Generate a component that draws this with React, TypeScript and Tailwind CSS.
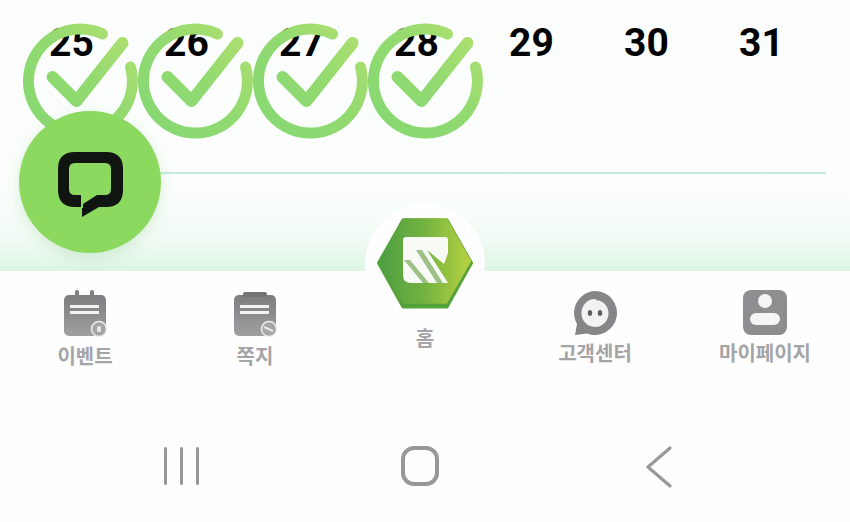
import React from 'react';

const days = [25, 26, 27, 28, 29, 30, 31];
const checked = [25, 26, 27, 28];

const CheckMark: React.FC<{ id: number }> = ({ id }) => (
  <svg width="120" height="120" viewBox="0 0 120 120" className="absolute left-[6px] top-0">
    <defs>
      <linearGradient id={`ring-${id}`} gradientUnits="userSpaceOnUse" x1="10" y1="110" x2="110" y2="10">
        <stop offset="0" stopColor="#86d873" />
        <stop offset="0.55" stopColor="#92da70" />
        <stop offset="1" stopColor="#b0df70" />
      </linearGradient>
    </defs>
    <path d="M82.5 13 A52 52 0 1 0 110.5 46" fill="none" stroke={`url(#ring-${id})`} strokeWidth="11" strokeLinecap="round" />
    <path d="M32.5 56 L56.5 80 L102.5 22" fill="none" stroke={`url(#ring-${id})`} strokeWidth="12" strokeLinecap="round" strokeLinejoin="round" />
  </svg>
);

const ChatIcon = () => (
  <svg width="66" height="66" viewBox="0 0 66 66">
    <path d="M18 1 H49 Q66 1 66 18 V39 Q66 56 49 56 H42 L25 66 V56 H18 Q1 56 1 39 V18 Q1 1 18 1 Z" fill="#111512" />
    <path d="M18 12 H48 Q54 12 54 18 V38 Q54 44 48 44 H40 L26 53 V44 H18 Q12 44 12 38 V18 Q12 12 18 12 Z" fill="#8cd95f" />
    <rect x="24" y="44" width="2" height="13" fill="#8cd95f" />
  </svg>
);

const Logo = () => (
  <svg width="100" height="94" viewBox="0 0 100 94">
    <defs>
      <linearGradient id="hex" x1="0" y1="0" x2="1" y2="0">
        <stop offset="0" stopColor="#4c9e42" />
        <stop offset="0.5" stopColor="#74b340" />
        <stop offset="1" stopColor="#b7d142" />
      </linearGradient>
    </defs>
    <path d="M28 4 H72 L96.5 47 L72 91 H28 L3.5 47 Z" fill="#55a23a" stroke="#55a23a" strokeWidth="3" strokeLinejoin="round" />
    <path d="M28.5 3 H71.5 L95.5 45 L71.5 87 H28.5 L4.5 45 Z" fill="url(#hex)" stroke="url(#hex)" strokeWidth="1.5" strokeLinejoin="round" />
    <path d="M31 21 H70 Q73 21 73 24 V37 L69 48 L52 34 L73 67 H36 Q28 67 28 59 V24 Q28 21 31 21 Z" fill="#f7faf5" />
    <path d="M41 34 H47 L68 66.9 H62 Z" fill="#9cc085" />
    <path d="M29 44 H35 L54 66.9 H48 Z" fill="#9cc085" />
  </svg>
);

const CalendarIcon = () => (
  <svg width="46" height="50" viewBox="0 0 46 50">
    <defs>
      <linearGradient id="cal" x1="0" y1="0" x2="0" y2="1">
        <stop offset="0" stopColor="#7d7d7f" />
        <stop offset="1" stopColor="#a0a0a2" />
      </linearGradient>
    </defs>
    <rect x="2" y="6" width="42" height="41" rx="5" fill="url(#cal)" />
    <rect x="13" y="1" width="4" height="11" rx="2" fill="#808082" />
    <rect x="28" y="1" width="4" height="11" rx="2" fill="#808082" />
    <rect x="8" y="16" width="29" height="3" fill="#f3f3f3" />
    <rect x="8" y="22" width="29" height="3" fill="#f3f3f3" />
    <circle cx="37" cy="40" r="7.5" fill="#a5a5a7" stroke="#eeeeee" strokeWidth="1.5" />
    <rect x="35" y="37" width="4" height="6" rx="1.5" fill="#e6e6e6" />
  </svg>
);

const NoteIcon = () => (
  <svg width="46" height="50" viewBox="0 0 46 50">
    <defs>
      <linearGradient id="note" x1="0" y1="0" x2="0" y2="1">
        <stop offset="0" stopColor="#7d7d7f" />
        <stop offset="1" stopColor="#a0a0a2" />
      </linearGradient>
    </defs>
    <rect x="2" y="6" width="42" height="41" rx="5" fill="url(#note)" />
    <rect x="11" y="3" width="24" height="5" rx="2" fill="#747476" />
    <rect x="8" y="16" width="29" height="3" fill="#f3f3f3" />
    <rect x="8" y="22" width="29" height="3" fill="#f3f3f3" />
    <circle cx="37" cy="40" r="7.5" fill="#a5a5a7" stroke="#eeeeee" strokeWidth="1.5" />
    <path d="M32 38 L41 42" stroke="#e8e8e8" strokeWidth="2" />
  </svg>
);

const SupportIcon = () => (
  <svg width="46" height="50" viewBox="0 0 46 50">
    <path d="M23 2 A22 22 0 1 1 15 44.5 L3 46 L5 35 A22 22 0 0 1 23 2 Z" fill="#868688" />
    <path d="M23 10 Q25 12 27 11.5 A13.5 13.5 0 1 1 9.5 24 A13.5 13.5 0 0 1 23 10 Z" fill="#f2f2f2" />
    <ellipse cx="18" cy="24" rx="2.2" ry="3" fill="#5d5d5f" />
    <ellipse cx="28" cy="24" rx="2.2" ry="3" fill="#5d5d5f" />
  </svg>
);

const MyPageIcon = () => (
  <svg width="46" height="50" viewBox="0 0 46 50">
    <rect x="1" y="1" width="44" height="45" rx="8" fill="#8e8e90" />
    <circle cx="23" cy="12" r="7" fill="#f5f5f5" />
    <rect x="8" y="24" width="30" height="12" rx="6" fill="#f5f5f5" />
  </svg>
);

const navItems = [
  { label: '이벤트', icon: <CalendarIcon />, labelClass: 'mt-[5px]' },
  { label: '쪽지', icon: <NoteIcon />, labelClass: 'mt-[5px]' },
  { label: '홈', icon: null, labelClass: '' },
  { label: '고객센터', icon: <SupportIcon />, labelClass: 'mt-[2px]' },
  { label: '마이페이지', icon: <MyPageIcon />, labelClass: 'mt-[2px]' },
];

export default function App() {
  return (
    <div className="relative w-[850px] h-[522px] overflow-hidden bg-[#fefefe] font-['Roboto','Noto_Sans_CJK_KR',sans-serif] flex flex-col">
      {/* calendar tail */}
      <div className="h-[271px] shrink-0 bg-gradient-to-b from-[#fbfefc] from-70% via-[#f2fbf5] via-88% to-[#dcf5e3]">
        <div className="grid grid-cols-[repeat(7,115px)] pl-[14px] pt-[21px]">
          {days.map((d) => (
            <div key={d} className="relative h-[45px] text-center text-[39px] leading-[45px] font-bold text-black">
              {d}
              {checked.includes(d) && <CheckMark id={d} />}
            </div>
          ))}
        </div>
        <div className="ml-[150px] mr-[24px] mt-[106px] h-[2px] bg-[#c6ebdc]" />
      </div>

      {/* live chat button */}
      <div className="absolute left-[19px] top-[111px] w-[142px] h-[142px] rounded-full bg-[#8cd95f] shadow-[0_4px_14px_rgba(120,190,120,0.25)] flex items-center justify-center pt-[4px]">
        <ChatIcon />
      </div>

      {/* bottom tabs */}
      <div className="bg-[#fefefe] rounded-t-[30px] grid grid-cols-5 h-[130px] shrink-0">
        {navItems.map((item) =>
          item.icon ? (
            <div key={item.label} className="flex flex-col items-center pt-[18px]">
              {item.icon}
              <span className={`${item.labelClass} text-[20px] leading-[26px] font-bold text-[#a4a4a7]`}>{item.label}</span>
            </div>
          ) : (
            <div key={item.label} className="relative flex flex-col items-center pt-[55px]">
              <div className="absolute top-[-67px] w-[120px] h-[120px] rounded-full bg-[#fefefe] flex items-center justify-center pb-[2px]">
                <Logo />
              </div>
              <span className="relative text-[20px] leading-[26px] font-bold text-[#a4a4a7]">{item.label}</span>
            </div>
          )
        )}
      </div>

      {/* android navigation */}
      <div className="grid grid-cols-3 flex-1">
        <div className="flex justify-center pt-[46px] pl-[80px] gap-[12.5px]">
          <div className="w-[3.5px] h-[38px] rounded-full bg-[#98989b]" />
          <div className="w-[3.5px] h-[38px] rounded-full bg-[#98989b]" />
          <div className="w-[3.5px] h-[38px] rounded-full bg-[#98989b]" />
        </div>
        <div className="flex justify-center pt-[45px] pr-[9px]">
          <div className="w-[38px] h-[40px] rounded-[13px] border-[4px] border-[#98989b]" />
        </div>
        <div className="flex justify-center pt-[45px] pr-[98px]">
          <svg width="26" height="42" viewBox="0 0 26 42">
            <path d="M24 2 L2 21 L24 40" fill="none" stroke="#98989b" strokeWidth="3.2" strokeLinecap="round" strokeLinejoin="round" />
          </svg>
        </div>
      </div>
    </div>
  );
}
